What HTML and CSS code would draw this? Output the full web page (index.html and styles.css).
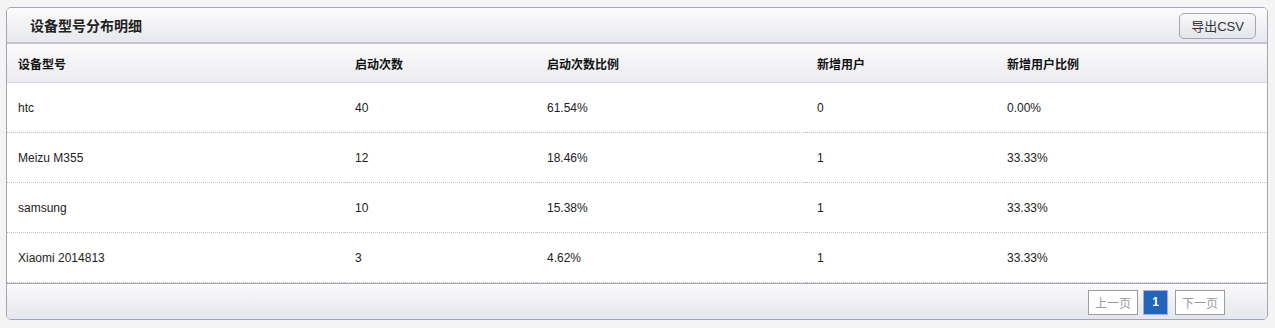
FILE: index.html
```html
<!DOCTYPE html>
<html lang="zh">
<head>
<meta charset="utf-8">
<title>设备型号分布明细</title>
<link rel="stylesheet" href="styles.css">
</head>
<body>
<div class="panel">
  <div class="panel-head">
    <h2 class="panel-title">设备型号分布明细</h2>
    <button class="btn-export">导出CSV</button>
  </div>
  <table class="data">
    <colgroup>
      <col class="c1"><col class="c2"><col class="c3"><col class="c4"><col class="c5">
    </colgroup>
    <thead>
      <tr><th>设备型号</th><th>启动次数</th><th>启动次数比例</th><th>新增用户</th><th>新增用户比例</th></tr>
    </thead>
    <tbody>
      <tr><td>htc</td><td>40</td><td>61.54%</td><td>0</td><td>0.00%</td></tr>
      <tr><td>Meizu M355</td><td>12</td><td>18.46%</td><td>1</td><td>33.33%</td></tr>
      <tr><td>samsung</td><td>10</td><td>15.38%</td><td>1</td><td>33.33%</td></tr>
      <tr><td>Xiaomi 2014813</td><td>3</td><td>4.62%</td><td>1</td><td>33.33%</td></tr>
    </tbody>
  </table>
  <div class="panel-foot">
    <div class="pager">
      <span class="pg pg-off">上一页</span>
      <span class="pg pg-cur">1</span>
      <span class="pg pg-off">下一页</span>
    </div>
  </div>
</div>
</body>
</html>
```

FILE: styles.css
```css
html, body {
  margin: 0;
  padding: 0;
  background: #f4f4f4;
}
body {
  padding: 7px 7px 0 6px;
  font-family: "Liberation Sans", Arial, "Noto Sans CJK SC", sans-serif;
  font-size: 12px;
  color: #222;
}
.panel {
  width: 1260px;
  border: 1px solid #a3a6b2;
  border-radius: 5px;
  background: #fff;
  overflow: hidden;
}
.panel-head {
  height: 34px;
  display: flex;
  align-items: center;
  justify-content: space-between;
  padding: 0 11px 0 23px;
  background: linear-gradient(#fcfcfd, #e7e8ed);
  border-bottom: 2px solid #c3c5ce;
}
.panel-title {
  margin: 0;
  font-size: 14px;
  font-weight: bold;
  color: #222;
}
.btn-export {
  height: 26px;
  width: 77px;
  margin-top: 1px;
  padding: 0;
  border: 1px solid #a4a6b0;
  border-radius: 5px;
  background: linear-gradient(#f8f8fa, #e4e5ea);
  font-family: "Liberation Sans", Arial, "Noto Sans CJK SC", sans-serif;
  font-size: 13px;
  color: #333;
}
.data {
  width: 100%;
  border-collapse: collapse;
  table-layout: fixed;
}
.c1 { width: 337px; }
.c2 { width: 192px; }
.c3 { width: 270px; }
.c4 { width: 190px; }
.c5 { width: 271px; }
.data th {
  height: 38px;
  padding: 0 0 0 11px;
  text-align: left;
  font-weight: bold;
  font-size: 12px;
  color: #111;
  background: linear-gradient(#fbfbfc, #ececf0);
  border-bottom: 1px solid #d3dae3;
}
.data td {
  height: 48px;
  padding: 1px 0 0 11px;
  border-bottom: 1px dotted #c4c4c4;
  color: #222;
}
.panel-foot {
  height: 35px;
  display: flex;
  align-items: center;
  justify-content: flex-end;
  padding-right: 42px;
  background: linear-gradient(#fafafb, #e6e7ec);
  border-top: 1px solid #a3a6b2;
}
.pager {
  display: flex;
  gap: 5px;
  margin-top: 1px;
}
.pg {
  height: 23px;
  display: flex;
  align-items: center;
  justify-content: center;
  font-size: 12px;
}
.pg-off {
  width: 48px;
  border: 1px solid #9c9c9c;
  background: #fff;
  color: #9a9a9a;
}
.pg-cur {
  width: 23px;
  border: 1px solid #a8a8f0;
  background: #2264b8;
  color: #fff;
  font-weight: bold;
  margin-right: 2px;
}
```
